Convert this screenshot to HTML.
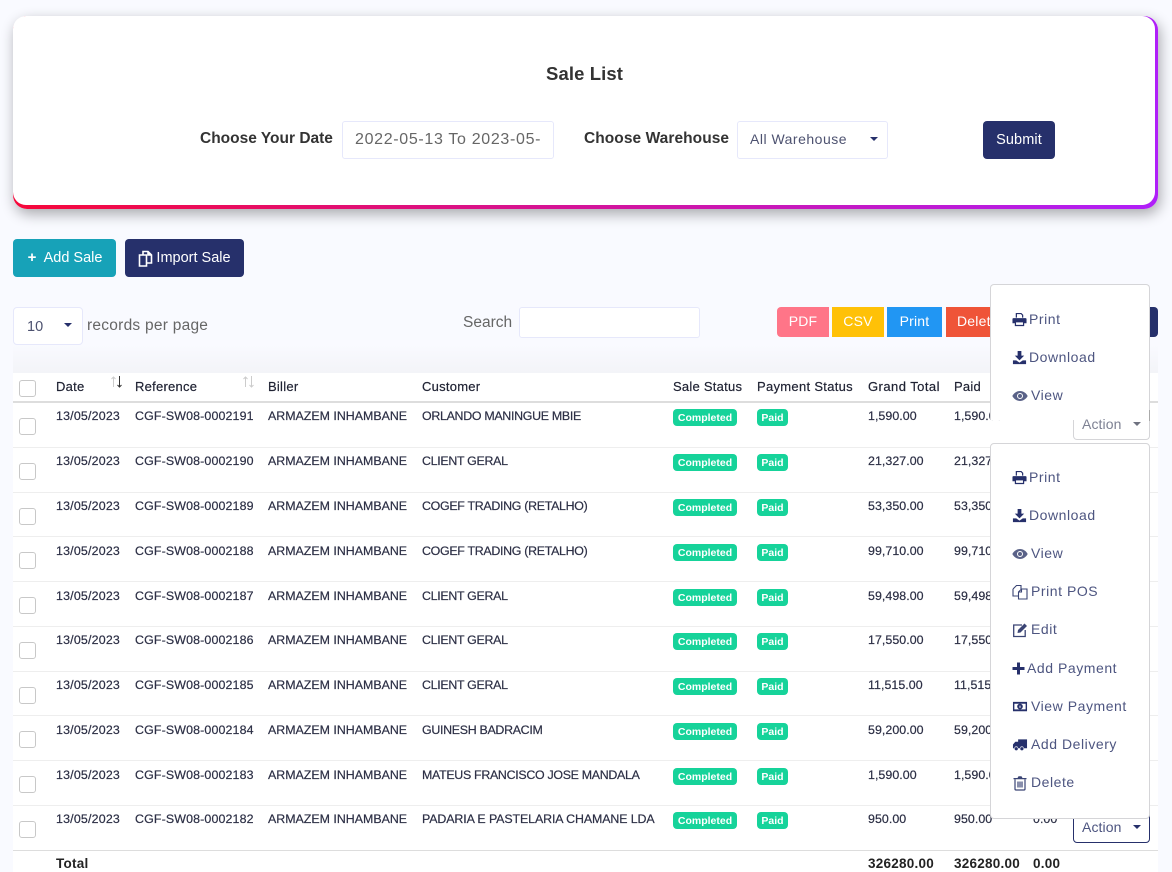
<!DOCTYPE html>
<html><head><meta charset="utf-8"><title>Sale List</title>
<style>
html,body{margin:0;padding:0}
body{width:1172px;height:872px;overflow:hidden;position:relative;background:#f9faff;font-family:"Liberation Sans",sans-serif;color:#2c2f45}
div,span,svg{position:absolute;white-space:nowrap;box-sizing:border-box}
.card{left:13px;top:16px;width:1145px;height:193px;border-radius:14px;background:linear-gradient(90deg,#f6083a,#b01ff9);box-shadow:2px 5px 14px rgba(0,0,0,.33)}
.cardin{left:0;top:0;width:1142px;height:189px;border-radius:13px;background:#fff}
.lb{font-weight:bold;font-size:15.5px;color:#333;line-height:20px}
.fld{background:#fff;border:1px solid #e6e8fb;border-radius:3px}
.caret{width:0;height:0;border-left:4.5px solid transparent;border-right:4.5px solid transparent;border-top:4.5px solid #26306b}
.btn{border-radius:4px;color:#fff;text-align:center;background:#26306b}
.ex{top:307px;height:30px;line-height:29px;font-size:14px;color:#fff;text-align:center;letter-spacing:.2px}
.shade{left:13px;top:345px;width:1145px;height:28px;background:linear-gradient(#f9faff,#f3f4f8)}
.h{top:373px;left:13px;width:1145px;height:30px;background:#fff;border-bottom:2px solid #ddd}
.h span{top:6px;line-height:16px;font-size:13px;color:#1f2233;letter-spacing:.25px;-webkit-text-stroke:.2px #1f2233}
.r{left:13px;width:1145px;background:#fff;border-bottom:1px solid #eee}
.r span{top:5px;line-height:16px;font-size:12.4px;color:#2c2f45;letter-spacing:.05px;-webkit-text-stroke:.2px #2c2f45}
.n span{top:6px}
.cb{left:6px;width:17px;height:17px;top:15px;border:1px solid #c8c8c8;border-radius:3px;background:#fff}
.r span.cm,.r span.pd{left:660px;top:6px;width:64px;height:17px;line-height:18px;background:#16d39a;border-radius:4px;color:#fff;font-size:10.5px;font-weight:bold;text-align:center;letter-spacing:0;-webkit-text-stroke:0}
.r span.pd{left:744px;width:31px}
.n span.cm,.n span.pd{top:7px !important}
.r span.d{left:43px;letter-spacing:.2px}
.r span.f{left:122px;letter-spacing:.14px}
.r span.b{left:255px;letter-spacing:0}
.r span.c{left:409px;letter-spacing:-.3px}
.r span.t{left:855px}
.r span.p{left:941px}
.ab{left:1073px;width:77px;height:30px;border:1px solid #26306b;border-radius:4px;background:#fff}
.menu{left:990px;width:160px;background:#fff;border:1px solid #d5d5d8;border-radius:4px;z-index:5}
.m{left:1029px;z-index:6;font-size:14px;line-height:18px;color:#4d5580;letter-spacing:.55px}
.i{left:1012px;width:15px;height:15px;z-index:6;fill:#26306b}
.tot{z-index:1;left:13px;top:851px;width:1145px;height:21px;background:#fff}
.tot span{top:5px;line-height:16px;font-size:13.5px;font-weight:bold;color:#222;letter-spacing:.25px}
</style></head><body>

<div class="card"><div class="cardin"></div></div>
<span style="left:546px;top:62px;font-size:18.5px;line-height:23px;font-weight:bold;color:#333;letter-spacing:.1px">Sale List</span>
<span class="lb" style="left:200px;top:129px">Choose Your Date</span>
<div class="fld" style="left:342px;top:121px;width:212px;height:38px;overflow:hidden"><span style="left:12px;top:8px;font-size:16px;line-height:20px;color:#666;letter-spacing:.67px">2022-05-13 To 2023-05-</span></div>
<span class="lb" style="left:584px;top:129px;letter-spacing:.06px">Choose Warehouse</span>
<div class="fld" style="left:737px;top:121px;width:151px;height:38px"><span style="left:12px;top:8px;font-size:14px;line-height:18px;color:#4d5270;letter-spacing:.5px">All Warehouse</span><div class="caret" style="left:132px;top:15px"></div></div>
<div class="btn" style="left:983px;top:121px;width:72px;height:38px;line-height:39px;font-size:14.5px;letter-spacing:.1px">Submit</div>

<div class="btn" style="left:13px;top:239px;width:103px;height:38px;line-height:37px;font-size:14.5px;background:#17a2b8;padding-right:1px;padding-left:2px"><b style="font-size:15px">+</b>&nbsp; Add Sale</div>
<div class="btn" style="left:125px;top:239px;width:119px;height:38px;line-height:38px;font-size:14.5px;padding-left:18px">Import Sale
<svg style="left:13px;top:11px;width:15px;height:17px" viewBox="0 0 15 17" fill="none" stroke="#fff" stroke-width="1.6"><path d="M1.500 5h7v11h-7zM5 5V1.500h5l3.500 3.500v8H9"/><path d="M10 1.500V5h3.500" fill="#fff"/></svg></div>

<div class="fld" style="left:13px;top:307px;width:70px;height:38px;border-radius:4px"><span style="left:13px;top:10px;font-size:14.5px;line-height:18px;color:#4d5270">10</span><div class="caret" style="left:50px;top:15px"></div></div>
<span style="left:87px;top:317px;font-size:15.5px;line-height:18px;color:#666;letter-spacing:.25px">records per page</span>
<span style="left:463px;top:314px;font-size:15.5px;line-height:18px;color:#666;letter-spacing:0">Search</span>
<div class="fld" style="left:519px;top:307px;width:181px;height:31px"></div>

<div class="ex" style="left:777px;width:52px;background:#ff7588;border-radius:4px 0 0 4px">PDF</div>
<div class="ex" style="left:832px;width:52px;background:#ffc107">CSV</div>
<div class="ex" style="left:887px;width:55px;background:#2196f3">Print</div>
<div class="ex" style="left:946px;width:60px;background:#ef5438;text-align:left;padding-left:11px">Delete</div>
<div class="ex" style="left:1006px;width:152px;background:#26306b;border-radius:0 4px 4px 0"></div>

<div class="shade"></div>
<div class="h">
<div class="cb" style="top:7px"></div>
<span style="left:43px">Date</span><span style="left:122px">Reference</span><span style="left:255px">Biller</span><span style="left:409px">Customer</span><span style="left:660px">Sale Status</span><span style="left:744px;letter-spacing:.3px">Payment Status</span><span style="left:855px;letter-spacing:.45px">Grand Total</span><span style="left:941px">Paid</span>
<svg style="left:97px;top:2px;width:14px;height:14px" viewBox="0 0 14 14" fill="none"><path d="M3.500 12V2M1.500 4l2-2 2 2" stroke="#ccc"/><path d="M9.500 1v11M7.500 10l2 2 2-2" stroke="#333"/></svg>
<svg style="left:229px;top:2px;width:14px;height:14px" viewBox="0 0 14 14" fill="none" stroke="#ccc"><path d="M3.500 12V2M1.500 4l2-2 2 2M9.500 1v11M7.500 10l2 2 2-2"/></svg>
</div>

<div class="r" style="top:403px;height:45px"><div class="cb"></div><span class="d">13/05/2023</span><span class="f">CGF-SW08-0002191</span><span class="b">ARMAZEM INHAMBANE</span><span class="c">ORLANDO MANINGUE MBIE</span><span class="cm">Completed</span><span class="pd">Paid</span><span class="t">1,590.00</span><span class="p">1,590.00</span></div>
<div class="r" style="top:448px;height:45px"><div class="cb"></div><span class="d">13/05/2023</span><span class="f">CGF-SW08-0002190</span><span class="b">ARMAZEM INHAMBANE</span><span class="c">CLIENT GERAL</span><span class="cm">Completed</span><span class="pd">Paid</span><span class="t">21,327.00</span><span class="p">21,327.00</span></div>
<div class="r" style="top:493px;height:44px"><div class="cb"></div><span class="d">13/05/2023</span><span class="f">CGF-SW08-0002189</span><span class="b">ARMAZEM INHAMBANE</span><span class="c">COGEF TRADING (RETALHO)</span><span class="cm">Completed</span><span class="pd">Paid</span><span class="t">53,350.00</span><span class="p">53,350.00</span></div>
<div class="r n" style="top:537px;height:45px"><div class="cb"></div><span class="d">13/05/2023</span><span class="f">CGF-SW08-0002188</span><span class="b">ARMAZEM INHAMBANE</span><span class="c">COGEF TRADING (RETALHO)</span><span class="cm">Completed</span><span class="pd">Paid</span><span class="t">99,710.00</span><span class="p">99,710.00</span></div>
<div class="r n" style="top:582px;height:45px"><div class="cb"></div><span class="d">13/05/2023</span><span class="f">CGF-SW08-0002187</span><span class="b">ARMAZEM INHAMBANE</span><span class="c">CLIENT GERAL</span><span class="cm">Completed</span><span class="pd">Paid</span><span class="t">59,498.00</span><span class="p">59,498.00</span></div>
<div class="r" style="top:627px;height:45px"><div class="cb"></div><span class="d">13/05/2023</span><span class="f">CGF-SW08-0002186</span><span class="b">ARMAZEM INHAMBANE</span><span class="c">CLIENT GERAL</span><span class="cm">Completed</span><span class="pd">Paid</span><span class="t">17,550.00</span><span class="p">17,550.00</span></div>
<div class="r" style="top:672px;height:44px"><div class="cb"></div><span class="d">13/05/2023</span><span class="f">CGF-SW08-0002185</span><span class="b">ARMAZEM INHAMBANE</span><span class="c">CLIENT GERAL</span><span class="cm">Completed</span><span class="pd">Paid</span><span class="t">11,515.00</span><span class="p">11,515.00</span></div>
<div class="r n" style="top:716px;height:45px"><div class="cb"></div><span class="d">13/05/2023</span><span class="f">CGF-SW08-0002184</span><span class="b">ARMAZEM INHAMBANE</span><span class="c">GUINESH BADRACIM</span><span class="cm">Completed</span><span class="pd">Paid</span><span class="t">59,200.00</span><span class="p">59,200.00</span></div>
<div class="r n" style="top:761px;height:45px"><div class="cb"></div><span class="d">13/05/2023</span><span class="f">CGF-SW08-0002183</span><span class="b">ARMAZEM INHAMBANE</span><span class="c">MATEUS FRANCISCO JOSE MANDALA</span><span class="cm">Completed</span><span class="pd">Paid</span><span class="t">1,590.00</span><span class="p">1,590.00</span></div>
<div class="r" style="top:806px;height:45px;border-bottom:1px solid #ddd"><div class="cb"></div><span class="d">13/05/2023</span><span class="f">CGF-SW08-0002182</span><span class="b">ARMAZEM INHAMBANE</span><span class="c" style="letter-spacing:-.1px">PADARIA E PASTELARIA CHAMANE LDA</span><span class="cm">Completed</span><span class="pd">Paid</span><span class="t">950.00</span><span class="p">950.00</span><span style="left:1020px;top:5px">0.00</span></div>
<div class="tot"><span style="left:43px">Total</span><span style="left:855px">326280.00</span><span style="left:941px">326280.00</span><span style="left:1020px">0.00</span></div>

<div class="ab" style="top:454px"></div><div class="ab" style="top:499px"></div><div class="ab" style="top:544px"></div><div class="ab" style="top:589px"></div><div class="ab" style="top:634px"></div><div class="ab" style="top:678px"></div><div class="ab" style="top:723px"></div><div class="ab" style="top:768px"></div>

<div class="ab" style="top:812px;height:31px"><span style="left:8px;top:6px;font-size:14px;line-height:17px;color:#4d5580;letter-spacing:.1px">Action</span><div class="caret" style="left:59px;top:12px"></div></div>

<div class="menu" style="top:284px;height:136px;border-bottom:0;border-radius:4px 4px 0 0"></div>
<div class="ab" style="top:409px;height:31px;border-color:#d5d5d8;z-index:6;border-top:0;border-radius:0 0 4px 4px;width:77px"><span style="left:8px;top:7px;font-size:14px;line-height:17px;color:#7d8193;letter-spacing:.1px">Action</span><div class="caret" style="left:59px;top:13px;border-top-color:#6f7280"></div></div>
<div style="left:1073px;top:409px;width:1px;height:11px;background:#fff;z-index:7"></div>
<div style="left:1149px;top:410px;width:1px;height:11px;background:#aaa;z-index:7"></div>
<div class="menu" style="top:443px;height:376px"></div>

<svg class="i" style="top:312px" viewBox="0 0 16 16"><path d="M4 1h6l2 2v3h-1.300V3.600L9.500 2.300H5.300V6H4zM1.500 6.500h13a1 1 0 0 1 1 1V12H13v3H3v-3H.5V7.500a1 1 0 0 1 1-1zM4.300 11v2.700h7.400V11z"/></svg>
<span class="m" style="top:310px">Print</span>
<svg class="i" style="top:350px" viewBox="0 0 16 16"><path d="M6 1h4v5h3l-5 5-5-5h3zM1 11h3.500L8 13.500l3.500-2.500H15v4H1z"/></svg>
<span class="m" style="top:348px">Download</span>
<svg class="i" style="top:388px;width:16px;height:16px" viewBox="0 0 16 16"><path fill="#5a6288" fill-rule="evenodd" d="M8 3c3.500 0 6.200 2.200 7.700 5-1.500 2.800-4.200 5-7.700 5S1.800 10.800.3 8C1.800 5.200 4.500 3 8 3zM8 5a3 3 0 1 0 0 6 3 3 0 0 0 0-6z"/><circle cx="8" cy="8" r="2" fill="#5a6288"/></svg>
<span class="m" style="top:386px;left:1031px">View</span>

<svg class="i" style="top:470px" viewBox="0 0 16 16"><path d="M4 1h6l2 2v3h-1.300V3.600L9.500 2.300H5.300V6H4zM1.500 6.500h13a1 1 0 0 1 1 1V12H13v3H3v-3H.5V7.500a1 1 0 0 1 1-1zM4.300 11v2.700h7.400V11z"/></svg>
<span class="m" style="top:468px">Print</span>
<svg class="i" style="top:508px" viewBox="0 0 16 16"><path d="M6 1h4v5h3l-5 5-5-5h3zM1 11h3.500L8 13.500l3.500-2.500H15v4H1z"/></svg>
<span class="m" style="top:506px">Download</span>
<svg class="i" style="top:546px;width:16px;height:16px" viewBox="0 0 16 16"><path fill="#5a6288" fill-rule="evenodd" d="M8 3c3.500 0 6.200 2.200 7.700 5-1.500 2.800-4.200 5-7.700 5S1.800 10.800.3 8C1.800 5.200 4.500 3 8 3zM8 5a3 3 0 1 0 0 6 3 3 0 0 0 0-6z"/><circle cx="8" cy="8" r="2" fill="#5a6288"/></svg>
<span class="m" style="top:544px;left:1031px">View</span>
<svg class="i" style="top:584px;width:16px;height:16px" viewBox="0 0 16 16"><path fill="none" stroke="#3a4474" stroke-width="1.100" d="M1 5V12h5M1 5l3.500-3.500H9V5M6.500 8v7H15V5H9.500zM6.500 8H9.500V5"/></svg>
<span class="m" style="top:582px;left:1031px">Print POS</span>
<svg class="i" style="top:622px;width:16px;height:16px" viewBox="0 0 16 16"><path fill="none" stroke="#3a4474" stroke-width="1.300" d="M10 3H1.700v11.500h11.500V8"/><path fill="#3a4474" d="M6 8 12.500 1.500l2.500 2.500L8.500 10.500 5.500 11z"/></svg>
<span class="m" style="top:620px;left:1031px">Edit</span>
<svg class="i" style="top:661px;width:13px" viewBox="0 0 13 15"><path d="M5 1.500h3v4.500h4.500v3H8v4.500H5V9H.5V6H5z"/></svg>
<span class="m" style="top:659px;left:1027px">Add Payment</span>
<svg class="i" style="top:699px;width:16px;height:15px" viewBox="0 0 16 16"><path fill-rule="evenodd" d="M.5 3h15v10H.5zM2 5v6h12V5zM8 5a3 3 0 1 1 0 6 3 3 0 0 1 0-6z"/><path d="M7.500 7h1v2.500h-1z" fill="#fff"/></svg>
<span class="m" style="top:697px;left:1031px">View Payment</span>
<svg class="i" style="top:737px;width:16px;height:15px" viewBox="0 0 16 16"><path d="M6 2.500h9.500v9.500H12a2 2 0 0 0-4 0H6a2 2 0 0 0-4 0H.5V8L3 5h3z"/><circle cx="4" cy="12.500" r="1.700"/><circle cx="10" cy="12.500" r="1.700"/></svg>
<span class="m" style="top:735px;left:1031px">Add Delivery</span>
<svg class="i" style="top:775px;width:16px;height:16px" viewBox="0 0 16 16"><path fill="#3a4474" d="M1.500 3H5.500L6.500 1.300h3L10.500 3h4v1.300h-13z"/><path fill="none" stroke="#3a4474" stroke-width="1.200" d="M3 4.300V14a1 1 0 0 0 1 1h8a1 1 0 0 0 1-1V4.300M6 6.500V12.500M8 6.500V12.500M10 6.500V12.500"/></svg>
<span class="m" style="top:773px;left:1031px">Delete</span>

</body></html>
